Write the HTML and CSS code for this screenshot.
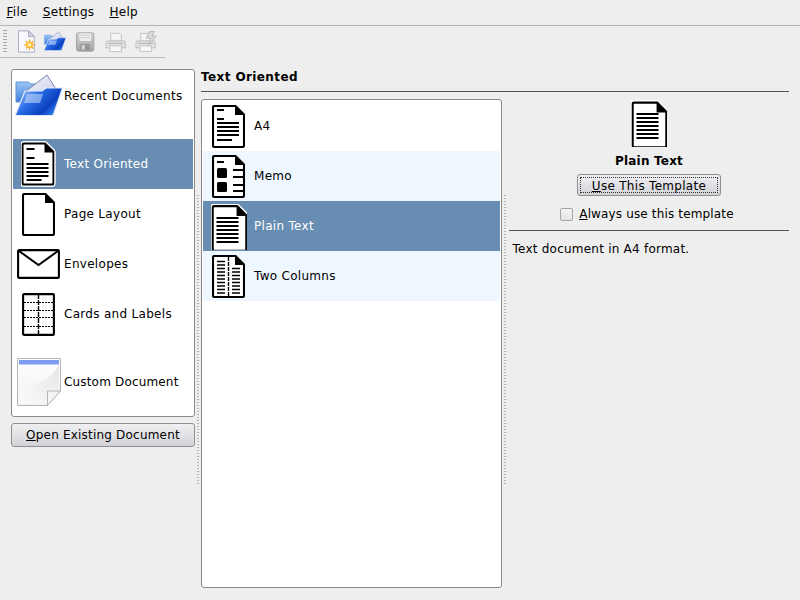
FILE: index.html
```html
<!DOCTYPE html>
<html lang="en">
<head>
  <meta charset="UTF-8" />
  <title>Choose Template</title>
  <link rel="stylesheet" href="styles.css">
</head>
<body>

  <svg class="defs" width="0" height="0">
    <defs>
      <linearGradient id="folderFront" x1="0" y1="0" x2="1" y2="0.6">
        <stop offset="0" stop-color="#bcd8f8" />
        <stop offset="0.45" stop-color="#2a6ee6" />
        <stop offset="0.8" stop-color="#0b3fc0" />
        <stop offset="1" stop-color="#2f7be8" />
      </linearGradient>
      <linearGradient id="folderBack" x1="0" y1="0" x2="0" y2="1">
        <stop offset="0" stop-color="#9cc6f4" />
        <stop offset="1" stop-color="#3f7fdc" />
      </linearGradient>
      <linearGradient id="paper" x1="0" y1="0" x2="1" y2="1">
        <stop offset="0" stop-color="#f6f7fd" />
        <stop offset="1" stop-color="#c6cbe6" />
      </linearGradient>
      <linearGradient id="sheet" x1="0" y1="0" x2="0" y2="1">
        <stop offset="0" stop-color="#ffffff" />
        <stop offset="1" stop-color="#f0f0f0" />
      </linearGradient>
      <linearGradient id="shine" x1="1" y1="0" x2="0" y2="1">
        <stop offset="0" stop-color="#e6e6e6" />
        <stop offset="1" stop-color="#fbfbfb" />
      </linearGradient>
      <linearGradient id="disk" x1="0" y1="0" x2="0" y2="1">
        <stop offset="0" stop-color="#d4d4d4" />
        <stop offset="1" stop-color="#a4a4a4" />
      </linearGradient>
      <symbol id="page" viewBox="0 0 33 43">
        <path d="M2.5 1H23.5L32 9.5V40.5Q32 42 30.5 42H2.5Q1 42 1 40.5V2.5Q1 1 2.5 1Z" fill="#fff" stroke="#000" stroke-width="2.1" />
        <path d="M23 .5L32.5 10H23Z" fill="#000" />
      </symbol>
      <symbol id="folder" viewBox="0 0 48 44">
        <path d="M1 8H13L16 10H26V28H1Z" fill="url(#folderBack)" stroke="#5f94dc" />
        <path d="M10 18L32 1L41 15L30 26Z" fill="url(#paper)" stroke="#7f86ac" />
        <path d="M10 17H27L31 14H47.5L38.5 40.5Q38 41.5 36.5 41.5H1.5Q.2 41.5 .6 40.2Z" fill="url(#folderFront)" stroke="#dfeafb" stroke-width="1.2" />
        <path d="M12 20H28L25 29H9Z" fill="#cfe2fa" opacity="0.55" />
      </symbol>
      <symbol id="printer" viewBox="0 0 22 22">
        <path d="M6 2H15L17 4V10H6Z" fill="#f4f4f4" stroke="#c2c2c2" />
        <path d="M2 10H20Q21 10 21 12V17H1V12Q1 10 2 10Z" fill="#e2e2e2" stroke="#bdbdbd" />
        <path d="M5 15H17V21H5Z" fill="#f6f6f6" stroke="#c2c2c2" />
        <path d="M3 12.5H19" stroke="#b4b4b4" />
      </symbol>
    </defs>
  </svg>

  <nav class="menubar">
    <span class="menu"><u>F</u>ile</span>
    <span class="menu"><u>S</u>ettings</span>
    <span class="menu"><u>H</u>elp</span>
  </nav>

  <div class="toolbar">
    <span class="grip"></span>
    <svg class="tool" width="20" height="23" viewBox="0 0 20 23">
      <path d="M1.5 .5H12L18 6.5V22.5H1.5Z" fill="#f8f8ff" stroke="#a9a9c0" />
      <path d="M12 .5V6.5H18Z" fill="#d5d5e4" stroke="#a9a9c0" />
      <path d="M13 9.5V20.5M7.5 15H18.5M9.2 11.2L16.8 18.8M16.8 11.2L9.2 18.8" stroke="#f4a11f" stroke-width="1.3" />
      <circle cx="13" cy="15" r="3.6" fill="#f9c23c" />
      <circle cx="13" cy="15" r="1.6" fill="#fff3c4" />
    </svg>
    <svg class="tool tool-open" width="23" height="21"><use href="#folder" /></svg>
    <svg class="tool tool-save" width="19" height="20" viewBox="0 0 19 20">
      <rect x=".5" y=".5" width="18" height="19" rx="2" fill="url(#disk)" stroke="#a4a4a4" />
      <rect x="3.5" y="1" width="12" height="8" fill="#ececec" />
      <path d="M4.5 3H14.5M4.5 5.5H14.5" stroke="#cccccc" />
      <rect x="4.5" y="12" width="10" height="7" fill="#969696" />
      <rect x="6" y="13" width="3" height="5" fill="#d6d6d6" />
    </svg>
    <svg class="tool tool-print" width="22" height="22"><use href="#printer" /></svg>
    <svg class="tool" width="23" height="22" viewBox="0 0 23 22">
      <use href="#printer" width="22" height="22" />
      <path d="M15 0L20 0L18 5H22L14 14L16 7H12Z" fill="#dadada" stroke="#b8b8b8" />
    </svg>
  </div>

  <main class="main">
    <section class="sidebar">
      <div class="panel categories">
        <div class="row row-recent">
          <span class="row-icon"><svg width="48" height="44"><use href="#folder" /></svg></span>
          <span>Recent Documents</span>
        </div>
        <div class="row selected">
          <span class="row-icon">
            <svg width="36" height="48" viewBox="-.5 -2 36 48">
              <use href="#page" width="33" height="44" class="halo" />
              <path d="M5 7H13M5 16H13M5 22H27M5 26H27M5 30H27M5 34H27M5 38H20" stroke="#000" stroke-width="2" />
            </svg>
          </span>
          <span>Text Oriented</span>
        </div>
        <div class="row">
          <span class="row-icon"><svg width="33" height="43"><use href="#page" /></svg></span>
          <span>Page Layout</span>
        </div>
        <div class="row">
          <span class="row-icon">
            <svg width="43" height="30" viewBox="0 0 43 30">
              <rect x="1.1" y="1.1" width="40.8" height="27.8" rx="1" fill="#fff" stroke="#000" stroke-width="2.1" />
              <path d="M2 2L21.5 16L41 2" fill="none" stroke="#000" stroke-width="2" />
            </svg>
          </span>
          <span>Envelopes</span>
        </div>
        <div class="row">
          <span class="row-icon">
            <svg width="33" height="43" viewBox="0 0 33 43">
              <rect x="1.1" y="1.1" width="30.8" height="40.8" rx="1" fill="#fff" stroke="#000" stroke-width="2.1" />
              <path d="M16.5 1V42" stroke="#000" stroke-width="1.4" stroke-dasharray="5 1" />
              <path d="M2 9.5H31M2 17.5H31M2 24.5H31M2 33.5H31" stroke="#000" stroke-width="1.2" stroke-dasharray="2 1" />
            </svg>
          </span>
          <span>Cards and Labels</span>
        </div>
        <div class="row row-custom">
          <span class="row-icon">
            <svg width="44" height="48" viewBox="0 0 44 48">
              <path d="M.5 .5H43.5V33L30.5 47.5H.5Z" fill="url(#sheet)" stroke="#b5b5b5" />
              <path d="M2 30Q30 28 42 7V33L30 46H2Z" fill="url(#shine)" />
              <rect x="2" y="2" width="40" height="4.5" fill="#7f9cf3" />
              <path d="M30.5 47.5V33H43.5Z" fill="#f4f4f4" stroke="#b5b5b5" />
            </svg>
          </span>
          <span class="label-tight">Custom Document</span>
        </div>
      </div>
      <button class="btn open-btn" type="button"><u>O</u>pen Existing Document</button>
    </section>

    <div class="handle handle-left"></div>

    <section class="content">
      <h2 class="title">Text Oriented</h2>
      <div class="columns">
        <div class="panel templates">
          <div class="row">
            <span class="row-icon">
              <svg width="33" height="43" viewBox="0 0 33 43">
                <use href="#page" />
                <path d="M5 5H12M5 14H12M5 18H27M5 22H27M5 26H27M5 30H27M5 35H20" stroke="#000" stroke-width="1.8" />
              </svg>
            </span>
            <span>A4</span>
          </div>
          <div class="row alt">
            <span class="row-icon">
              <svg width="33" height="43" viewBox="0 0 33 43">
                <use href="#page" />
                <path d="M5 7H12M21 15H31M21 22H31M21 30H31M21 36H31" stroke="#000" stroke-width="1.8" />
                <rect x="5" y="13" width="10" height="10" rx="1.5" fill="#000" />
                <rect x="5" y="27" width="10" height="10" rx="1.5" fill="#000" />
              </svg>
            </span>
            <span>Memo</span>
          </div>
          <div class="row selected">
            <span class="row-icon">
              <svg width="36" height="47" viewBox="-.5 -2 36 47">
                <use href="#page" class="halo" />
                <path d="M5 13H27M5 17H27M5 21H27M5 25H27M5 29H27M5 33H27M5 37H27" stroke="#000" stroke-width="1.8" />
              </svg>
            </span>
            <span>Plain Text</span>
          </div>
          <div class="row alt">
            <span class="row-icon">
              <svg width="33" height="43" viewBox="0 0 33 43">
                <use href="#page" />
                <path d="M16.5 2V42" stroke="#000" stroke-width="1.4" stroke-dasharray="4 1" />
                <path d="M5 6.5H13M5 10H13M5 13.5H13M5 17H13M5 20.5H13M5 24H13M5 27.5H13M5 31H13M5 34.5H13M5 38H13M20 13.5H28M20 17H28M20 20.5H28M20 24H28M20 27.5H28M20 31H28M20 34.5H28M20 38H28" stroke="#000" stroke-width="1.7" />
              </svg>
            </span>
            <span>Two Columns</span>
          </div>
        </div>

        <div class="handle handle-right"></div>

        <aside class="details">
          <div class="preview">
            <svg width="36" height="48" viewBox="-.5 -2 36 48">
              <use href="#page" class="halo" />
              <path d="M5 13H27M5 17H27M5 21H27M5 25H27M5 29H27M5 33H27M5 37H27" stroke="#000" stroke-width="1.8" />
            </svg>
            <strong class="preview-name">Plain Text</strong>
            <button class="btn use-btn" type="button"><span class="focus"><u>U</u>se This Template</span></button>
            <label class="always"><span class="checkbox"></span><span><u>A</u>lways use this template</span></label>
          </div>
          <p class="description">Text document in A4 format.</p>
        </aside>
      </div>
    </section>
  </main>

</body>
</html>
```

FILE: styles.css
```css
* {
  box-sizing: border-box;
}
html, body {
  height: 100%;
}
body {
  margin: 0;
  overflow: hidden;
  background-color: #eeeeee;
  color: #000;
  font-family: "DejaVu Sans", sans-serif;
  font-size: 12px;
  letter-spacing: 0.3px;
}
.defs {
  position: absolute;
}

/* menu and toolbar */
.menubar {
  display: flex;
  height: 26px;
  padding: 5px 0 0 6.5px;
  gap: 15px;
  border-bottom: 1px solid #b4b4b4;
}
.toolbar {
  display: flex;
  align-items: center;
  width: 165px;
  height: 32px;
  padding-left: 3px;
  border-bottom: 1px solid #b9b9b9;
}
.grip {
  width: 4px;
  height: 24px;
  margin-right: 10px;
  background: repeating-linear-gradient(to bottom, #aaa 0 1px, transparent 1px 3px);
}
.tool {
  margin-right: 8px;
}
.tool-open {
  margin-right: 10px;
}
.tool-save {
  margin-right: 10px;
}
.tool-print {
  margin-right: 9px;
}

/* main area */
.main {
  display: flex;
  padding: 11px 11px 12px 11px;
  height: 542px;
}
.sidebar {
  display: flex;
  flex-direction: column;
  width: 184px;
  gap: 6px;
}
.panel {
  background: #fff;
  border: 1px solid #8a8a8a;
  border-radius: 3px;
  padding: 1px;
}
.categories {
  height: 348px;
}
.row {
  display: flex;
  align-items: center;
  height: 50px;
}
.row-icon {
  display: flex;
  justify-content: center;
  align-items: center;
  width: 51px;
  flex: none;
}
.row-recent {
  margin-bottom: 18px;
}
.row-custom {
  margin-top: 18px;
}
.label-tight {
  letter-spacing: 0.17px;
}
.selected {
  background: #678db2;
  color: #fff;
}
.alt {
  background: #eef6ff;
}
.halo {
  filter: drop-shadow(1px 0 0 #fff) drop-shadow(-1px 0 0 #fff) drop-shadow(0 1px 0 #fff) drop-shadow(0 -1px 0 #fff);
}

.btn {
  font: inherit;
  letter-spacing: inherit;
  color: #000;
  border: 1px solid #8f8f8f;
  border-radius: 3px;
  background: linear-gradient(to bottom, #f0f0f2, #d2d3d8);
  padding: 0;
}
.open-btn {
  height: 24px;
  letter-spacing: 0.2px;
}

.handle {
  flex: none;
  width: 2px;
  background: repeating-linear-gradient(to bottom, #b5b5b5 0 1px, transparent 1px 3px);
}
.handle-left {
  margin: 126px 2px 103px 2px;
}
.handle-right {
  margin: 96px 2px 103px 2px;
}

.content {
  display: flex;
  flex-direction: column;
  flex: 1;
}
.title {
  margin: 0;
  height: 23px;
  font-size: 12px;
  letter-spacing: 0.4px;
  padding-top: 1px;
  border-bottom: 1px solid #555;
}
.columns {
  display: flex;
  flex: 1;
  margin-top: 7px;
}
.templates {
  width: 301px;
  flex: none;
}
.details {
  flex: 1;
  margin-left: 1px;
}
.preview {
  display: flex;
  flex-direction: column;
  align-items: center;
  height: 132px;
  border-bottom: 1px solid #555;
}
.preview-name {
  margin-top: 7px;
  letter-spacing: 0.2px;
}
.use-btn {
  width: 144px;
  height: 22px;
  margin-top: 6px;
  padding: 2px;
}
.focus {
  display: block;
  height: 100%;
  line-height: 16px;
  border: 1px dotted #333;
}
.always {
  display: flex;
  align-items: center;
  gap: 6px;
  margin-top: 11px;
  margin-right: 4px;
  letter-spacing: 0.15px;
}
.checkbox {
  width: 13px;
  height: 13px;
  border: 1px solid #a5a5a5;
  border-radius: 2px;
  background: linear-gradient(to bottom, #f4f4f4, #e4e4e4);
}
.description {
  margin: 11px 0 0 3.5px;
  letter-spacing: 0.23px;
}
```
